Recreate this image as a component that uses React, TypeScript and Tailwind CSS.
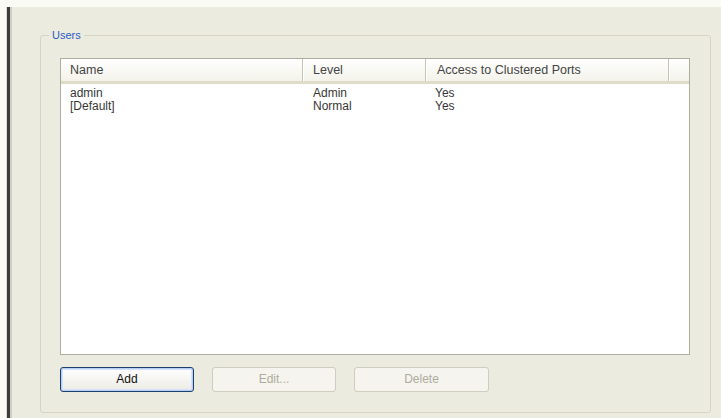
import React from "react";

type User = { name: string; level: string; clustered: string };

const users: User[] = [
  { name: "admin", level: "Admin", clustered: "Yes" },
  { name: "[Default]", level: "Normal", clustered: "Yes" },
];

const columns = [
  { label: "Name", width: "w-[242px]", pad: "pl-[9px]" },
  { label: "Level", width: "w-[123px]", pad: "pl-[10px]" },
  { label: "Access to Clustered Ports", width: "w-[243px]", pad: "pl-[11px]" },
];

function HeaderCell({ label, width, pad }: { label: string; width: string; pad: string }) {
  return (
    <div className={`${width} ${pad} h-full flex items-center border-r border-[#c7c5b2] shadow-[1px_0_0_#ffffff]`}>
      {label}
    </div>
  );
}

export default function App() {
  return (
    <div
      className="w-[721px] h-[418px] flex flex-col bg-[#fbfbf6] overflow-hidden text-[12px] leading-[13px] text-[#363636]"
      style={{ fontFamily: '"Liberation Sans", Arial, sans-serif' }}
    >
      <div className="h-[7px] shrink-0" />
      <div className="flex flex-1 min-h-0">
        <div className="w-[7px] border-r border-[#dcdcd4]" />
        <div className="w-[3px] bg-[#3c3c3c]" />
        <div className="w-[2px] bg-[#cfcfc6]" />
        <div className="flex-1 bg-[#ecebdf] pl-[28px] pr-[10px] pt-[28px] pb-[5px]">
          {/* Users group box */}
          <div className="relative h-[378px] border border-[#d6d4c3] rounded-[3px] pl-[19px] pr-[20px] pt-[22px]">
            <span className="absolute -top-[8px] left-[8px] px-[3px] bg-[#ecebdf] text-[#2b5cc4] text-[11px] leading-[14px]">
              Users
            </span>

            {/* list view */}
            <div className="h-[297px] border border-[#aeae9f] bg-white flex flex-col">
              <div className="h-[25px] shrink-0 flex bg-gradient-to-b from-[#ffffff] to-[#f3f2ea] border-b-[3px] border-[#dedbc8] text-[#444444] text-[12.5px]">
                {columns.map((c) => (
                  <HeaderCell key={c.label} {...c} />
                ))}
                <div className="flex-1" />
              </div>
              <div className="pt-[3px]">
                {users.map((u) => (
                  <div key={u.name} className="flex h-[13px]">
                    <div className="w-[242px] pl-[9px]">{u.name}</div>
                    <div className="w-[123px] pl-[10px]">{u.level}</div>
                    <div className="w-[243px] pl-[9px]">{u.clustered}</div>
                  </div>
                ))}
              </div>
            </div>

            {/* buttons */}
            <div className="flex gap-[18px] mt-[12px]">
              <button className="w-[134px] h-[25px] rounded-[3px] border border-[#1d3f6e] bg-gradient-to-b from-[#ffffff] to-[#ecebe4] shadow-[inset_0_0_0_1px_#b8cff5,inset_0_0_0_2px_#d6e3fa] text-[#111111] text-[12px]">
                Add
              </button>
              <button
                disabled
                className="w-[124px] h-[25px] rounded-[3px] border border-[#cfcdbd] bg-[#f5f4ee] text-[#aeac9c] text-[12px]"
              >
                Edit...
              </button>
              <button
                disabled
                className="w-[135px] h-[25px] rounded-[3px] border border-[#cfcdbd] bg-[#f5f4ee] text-[#aeac9c] text-[12px]"
              >
                Delete
              </button>
            </div>
          </div>
        </div>
      </div>
    </div>
  );
}
